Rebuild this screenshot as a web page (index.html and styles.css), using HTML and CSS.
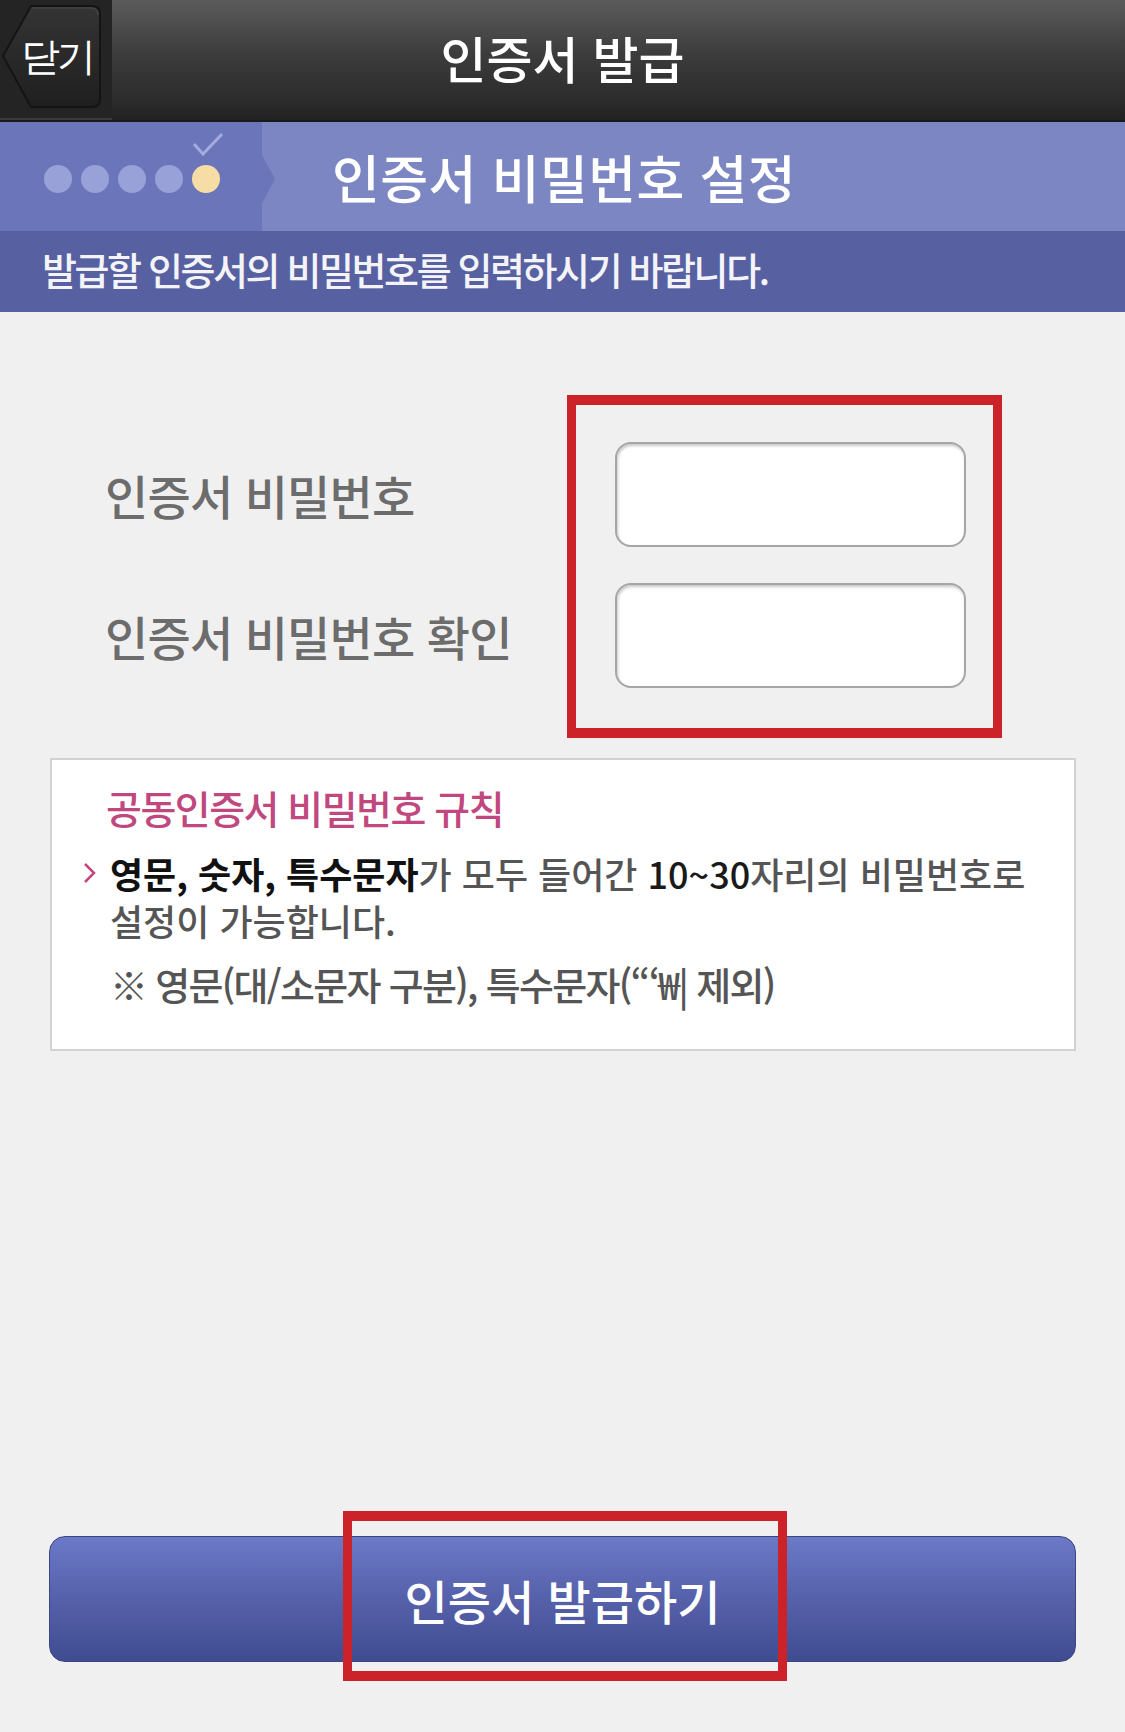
FILE: index.html
```html
<!DOCTYPE html>
<html lang="ko">
<head>
    <meta charset="UTF-8">
    <meta name="viewport" content="width=device-width, initial-scale=1.0">
    <title>인증서 발급</title>
    <link rel="stylesheet" href="styles.css">
</head>
<body>

    <header class="topbar">
        <button class="close-btn" type="button">
            <svg class="close-shape" width="112" height="118" viewBox="0 0 112 118">
                <defs>
                    <linearGradient id="closeFill" x1="0" y1="0" x2="0" y2="1">
                        <stop offset="0" stop-color="#343434"/>
                        <stop offset="1" stop-color="#1f1f1f"/>
                    </linearGradient>
                </defs>
                <path d="M31 6 H92 Q100 6 100 14 V99 Q100 107 92 107 H31 L3 56 Z" fill="url(#closeFill)" stroke="#141414" stroke-width="2"/>
                <path d="M32 8 H91 Q98 8 98 15" fill="none" stroke="#4a4a4a" stroke-width="1"/>
            </svg>
            <span class="close-label">닫기</span>
        </button>
        <h1 class="topbar-title">인증서 발급</h1>
        <span></span>
    </header>

    <section class="steps">
        <div class="progress">
            <span class="dot"></span>
            <span class="dot"></span>
            <span class="dot"></span>
            <span class="dot"></span>
            <span class="dot current">
                <svg class="check" width="32" height="24" viewBox="0 0 32 24">
                    <path d="M2 12 L11 22 L30 2" fill="none" stroke="#a3abdf" stroke-width="3"/>
                </svg>
            </span>
        </div>
        <h2 class="steps-title">인증서 비밀번호 설정</h2>
    </section>

    <p class="notice">발급할 인증서의 비밀번호를 입력하시기 바랍니다.</p>

    <main class="content">
        <div class="fields">
            <div class="labels">
                <label for="pw">인증서 비밀번호</label>
                <label for="pwConfirm">인증서 비밀번호 확인</label>
            </div>
            <div class="inputs marked">
                <input type="password" id="pw">
                <input type="password" id="pwConfirm">
            </div>
        </div>

        <div class="rules">
            <h3>공동인증서 비밀번호 규칙</h3>
            <div class="rule">
                <svg class="bullet" width="14" height="22" viewBox="0 0 14 22">
                    <path d="M2 2 L11 11 L2 20" fill="none" stroke="#c1477f" stroke-width="2.5"/>
                </svg>
                <p><b>영문, 숫자, 특수문자</b>가 모두 들어간 <span class="num">10~30</span>자리의 비밀번호로 설정이 가능합니다.</p>
            </div>
            <p class="rule-note">※ 영문(대/소문자 구분), 특수문자(“‘₩| 제외)</p>
        </div>

        <div class="submit-wrap">
            <button class="submit" type="button">인증서 발급하기</button>
            <span class="submit-mark"></span>
        </div>
    </main>

</body>
</html>
```

FILE: styles.css
```css
* {
    box-sizing: border-box;
}

body {
    margin: 0;
    width: 1125px;
    background-color: #f0f0f0;
    font-family: "Noto Sans CJK KR", "Noto Sans", sans-serif;
}

/* top bar */
.topbar {
    display: grid;
    grid-template-columns: 112px 1fr 112px;
    align-items: center;
    height: 122px;
    background: linear-gradient(#5b5b5b, #3c3c3c 45%, #2b2b2b 85%, #222222);
    border-bottom: 2px solid #1a1a1a;
}

.close-btn {
    position: relative;
    width: 112px;
    height: 120px;
    padding: 0;
    border: none;
    border-bottom: 2px solid #3a3a3a;
    background: #242424;
    cursor: pointer;
}

.close-shape {
    position: absolute;
    left: 0;
    top: 0;
}

.close-label {
    position: relative;
    display: block;
    margin: -6px 0 0 2px;
    color: #ffffff;
    font-family: inherit;
    font-size: 39px;
    font-weight: 500;
    letter-spacing: -3px;
    line-height: 1;
}

.topbar-title {
    margin: 0 0 6px;
    text-align: center;
    color: #ffffff;
    font-size: 50px;
    font-weight: 500;
}

/* steps */
.steps {
    display: flex;
    height: 109px;
    background-color: #7b86c3;
}

.progress {
    position: relative;
    display: flex;
    align-items: center;
    gap: 9px;
    width: 262px;
    padding: 4px 0 0 44px;
    background-color: #6a76b9;
}

.progress::after {
    content: "";
    position: absolute;
    right: -13px;
    top: 33px;
    border-top: 24px solid transparent;
    border-bottom: 24px solid transparent;
    border-left: 13px solid #6a76b9;
}

.dot {
    position: relative;
    width: 28px;
    height: 28px;
    border-radius: 50%;
    background-color: #98a1d8;
}

.dot.current {
    background-color: #f6dca5;
}

.check {
    position: absolute;
    left: 0;
    top: -33px;
}

.steps-title {
    margin: 0 0 0 70px;
    align-self: center;
    color: #ffffff;
    font-size: 52px;
    font-weight: 500;
    letter-spacing: 0.4px;
}

.notice {
    margin: 0;
    height: 81px;
    padding: 10px 0 0 42px;
    background-color: #5761a1;
    color: #f4f4f8;
    font-size: 38px;
    font-weight: 500;
    letter-spacing: -2.4px;
}

/* content */
.content {
    display: flex;
    flex-direction: column;
    min-height: 1420px;
    padding: 83px 49px 70px 49px;
}

.fields {
    display: flex;
}

.labels {
    display: flex;
    flex-direction: column;
    gap: 36px;
    width: 518px;
    padding: 47px 0 0 56px;
}

.labels label {
    display: flex;
    align-items: center;
    height: 105px;
    color: #6c6c6c;
    font-size: 47px;
    font-weight: 500;
    letter-spacing: -0.8px;
}

.inputs {
    display: flex;
    flex-direction: column;
    gap: 36px;
}

.marked {
    padding: 37px 27px 40px 39px;
    border: 9px solid #cc2229;
    border-width: 10px 9px;
}

.inputs input {
    width: 351px;
    height: 105px;
    border: 2px solid #a6a6a6;
    border-radius: 16px;
    background: #ffffff;
    box-shadow: inset 1px 2px 3px rgba(0, 0, 0, 0.22);
}

.rules {
    margin: 20px 0 0 1px;
    height: 293px;
    padding: 22px 0 0 0;
    border: 2px solid #d2d2d2;
    background-color: #ffffff;
}

.rules h3 {
    margin: 0 0 18px 54px;
    color: #c1477f;
    font-size: 39px;
    font-weight: 500;
    letter-spacing: -1.5px;
    line-height: 50px;
}

.rule {
    display: flex;
    align-items: flex-start;
    padding-left: 31px;
}

.bullet {
    flex: none;
    margin: 12px 13px 0 0;
}

.rule p {
    margin: 0;
    width: 945px;
    color: #555555;
    font-size: 36px;
    font-weight: 500;
    line-height: 47px;
}

.rule b {
    color: #111111;
    font-weight: 700;
}

.rule .num {
    color: #1a1a1a;
}

.rule-note {
    margin: 16px 0 0 58px;
    color: #555555;
    font-size: 38px;
    font-weight: 500;
    letter-spacing: -1.7px;
    line-height: 47px;
}

.submit-wrap {
    position: relative;
    margin-top: auto;
}

.submit {
    display: block;
    width: 100%;
    height: 126px;
    border: 1px solid #3b457f;
    border-radius: 16px;
    background: linear-gradient(#6b79c7, #5863ad 45%, #404c90);
    color: #ffffff;
    font-family: inherit;
    font-size: 47px;
    font-weight: 500;
    cursor: pointer;
}

.submit-mark {
    position: absolute;
    left: 294px;
    top: -25px;
    width: 444px;
    height: 170px;
    border: 10px solid #cc2229;
    border-width: 10px 9px;
    pointer-events: none;
}
```
